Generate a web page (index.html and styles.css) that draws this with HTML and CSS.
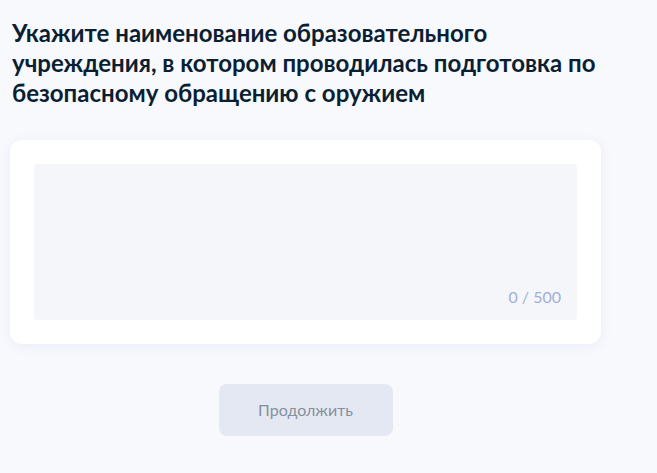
FILE: index.html
```html
<!DOCTYPE html>
<html lang="ru">
<head>
  <meta charset="UTF-8" />
  <title>Образовательное учреждение</title>
  <meta name="viewport" content="width=device-width, initial-scale=1" />
  <link rel="stylesheet" href="styles.css">
</head>
<body>
  <div class="page">
    <h2 class="title">Укажите наименование образовательного учреждения, в котором проводилась подготовка по безопасному обращению с оружием</h2>

    <div class="card">
      <div class="field">
        <textarea id="school" maxlength="500"></textarea>
        <span class="counter" id="counter">0 / 500</span>
      </div>
    </div>

    <div class="actions">
      <button id="nextBtn" type="button" disabled>Продолжить</button>
    </div>
  </div>

  <script>
    const area = document.getElementById("school");
    area.addEventListener("input", () => {
      document.getElementById("counter").textContent = `${area.value.length} / 500`;
      document.getElementById("nextBtn").disabled = area.value.trim() === "";
    });
  </script>
</body>
</html>
```

FILE: styles.css
```css
body {
  margin: 0;
  background: #f8f9fd;
  font-family: Lato, "Noto Sans", sans-serif;
  color: #0b1f33;
}
.page {
  width: 591px;
  padding: 18px 0 0 10px;
}
.title {
  margin: 0 0 32px 2px;
  font-size: 24px;
  line-height: 30px;
  font-weight: 700;
}
.card {
  background: #fff;
  border-radius: 12px;
  padding: 24px;
  box-shadow: 0 2px 12px rgba(102, 130, 200, 0.10);
}
.field {
  position: relative;
  height: 156px;
}
.field textarea {
  width: 100%;
  height: 100%;
  box-sizing: border-box;
  border: none;
  border-radius: 4px;
  background: #f5f6fa;
  resize: none;
  outline: none;
  padding: 12px 16px;
  font: 16px Lato, sans-serif;
}
.counter {
  position: absolute;
  right: 16px;
  bottom: 14px;
  font-size: 16px;
  color: #9fb0d8;
}
.actions {
  display: flex;
  justify-content: center;
  margin-top: 40px;
}
.actions button {
  width: 174px;
  height: 52px;
  padding-bottom: 2px;
  border: none;
  border-radius: 8px;
  background: #e4e8f2;
  color: #86909c;
  font: 16px Lato, sans-serif;
}
```
